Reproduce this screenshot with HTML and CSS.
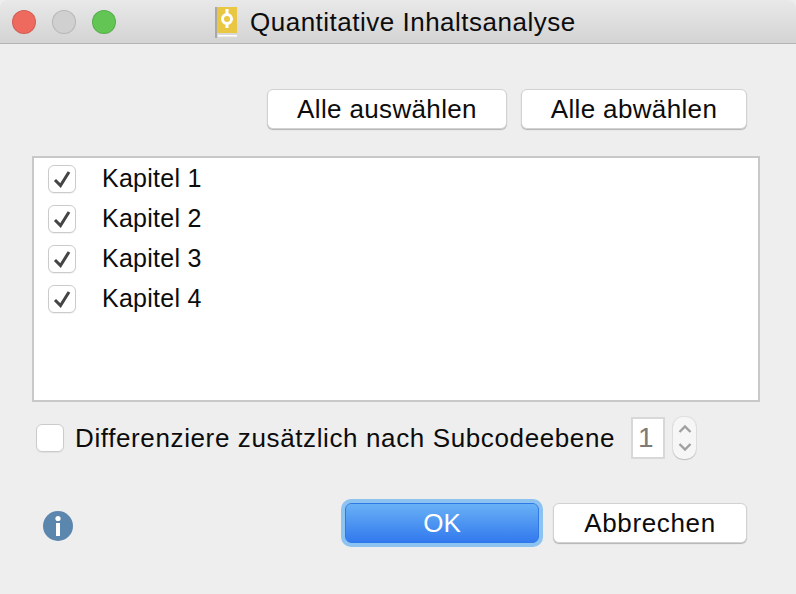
FILE: index.html
```html
<!DOCTYPE html>
<html lang="de">
<head>
    <meta charset="UTF-8">
    <title>Quantitative Inhaltsanalyse</title>
    <link rel="stylesheet" href="styles.css">
</head>
<body>
    <div class="titlebar">
        <div class="lights">
            <span class="light red"></span>
            <span class="light grey"></span>
            <span class="light green"></span>
        </div>
        <svg class="doc-icon" width="22" height="31" viewBox="0 0 22 31">
            <rect x="0" y="0" width="2" height="31" fill="#a8a8a8"/>
            <rect x="2" y="0" width="20" height="26" fill="#e9c742"/>
            <rect x="2" y="26" width="20" height="5" fill="#d8d8d8"/>
            <rect x="3" y="28" width="19" height="1.5" fill="#fff"/>
            <rect x="10.5" y="2" width="3" height="19" fill="#fff"/>
            <circle cx="12" cy="12" r="4.5" fill="#e9c742" stroke="#fff" stroke-width="3"/>
        </svg>
        <div class="title">Quantitative Inhaltsanalyse</div>
    </div>

    <div class="dialog">
        <div class="top-actions">
            <button class="btn select-all">Alle auswählen</button>
            <button class="btn deselect-all">Alle abwählen</button>
        </div>

        <div class="chapter-list">
            <div class="chapter"><span class="check"><svg width="18" height="18" viewBox="0 0 18 18"><path d="M2 10 L7.5 15.5 L16 2" class="tick"/></svg></span><span class="chapter-name">Kapitel 1</span></div>
            <div class="chapter"><span class="check"><svg width="18" height="18" viewBox="0 0 18 18"><path d="M2 10 L7.5 15.5 L16 2" class="tick"/></svg></span><span class="chapter-name">Kapitel 2</span></div>
            <div class="chapter"><span class="check"><svg width="18" height="18" viewBox="0 0 18 18"><path d="M2 10 L7.5 15.5 L16 2" class="tick"/></svg></span><span class="chapter-name">Kapitel 3</span></div>
            <div class="chapter"><span class="check"><svg width="18" height="18" viewBox="0 0 18 18"><path d="M2 10 L7.5 15.5 L16 2" class="tick"/></svg></span><span class="chapter-name">Kapitel 4</span></div>
        </div>

        <div class="subcode-row">
            <span class="check empty"></span>
            <span class="subcode-label">Differenziere zusätzlich nach Subcodeebene</span>
            <span class="level-input">1</span>
            <span class="stepper">
                <svg width="14" height="36" viewBox="0 0 14 36">
                    <path d="M1.5 12 L7 6.5 L12.5 12" class="chevron"/>
                    <path d="M1.5 24 L7 29.5 L12.5 24" class="chevron"/>
                </svg>
            </span>
        </div>

        <div class="bottom-actions">
            <svg class="info-icon" width="30" height="30" viewBox="0 0 30 30">
                <circle cx="15" cy="15" r="15" fill="#5b86ad"/>
                <circle cx="15" cy="7.5" r="2.6" fill="#fff"/>
                <rect x="13" y="12" width="4" height="13" fill="#fff"/>
            </svg>
            <button class="btn ok">OK</button>
            <button class="btn cancel">Abbrechen</button>
        </div>
    </div>
</body>
</html>
```

FILE: styles.css
```css
* {
    box-sizing: border-box;
}

html, body {
    height: 100%;
}

body {
    margin: 0;
    background-color: #eeeeee;
    font-family: "Liberation Sans", Arial, sans-serif;
    font-size: 26px;
    letter-spacing: 0.5px;
    color: #0c0c0c;
    overflow: hidden;
}

.titlebar {
    height: 44px;
    display: flex;
    align-items: center;
    padding-left: 12px;
    background: linear-gradient(#e9e9e9, #d3d3d3);
    border-bottom: 1px solid #b4b4b4;
    border-radius: 8px 8px 0 0;
}

.lights {
    display: flex;
    gap: 16px;
}

.light {
    width: 24px;
    height: 24px;
    border-radius: 50%;
    border: 1px solid rgba(0,0,0,0.12);
}

.light.red {
    background-color: #ee6a5f;
}

.light.grey {
    background-color: #d0d0d0;
}

.light.green {
    background-color: #62c554;
}

.doc-icon {
    margin-left: 99px;
    margin-top: 2px;
}

.title {
    margin-left: 13px;
    line-height: 44px;
}

.dialog {
    padding: 45px 36px 0 32px;
}

.top-actions {
    display: flex;
    justify-content: flex-end;
    gap: 14px;
    padding-right: 13px;
}

.btn {
    height: 40px;
    padding: 0;
    border: 1px solid #d2d2d2;
    border-radius: 6px;
    background-color: #fff;
    box-shadow: 0 1px 1px rgba(0,0,0,0.25);
    font-family: inherit;
    font-size: 26px;
    letter-spacing: 0.35px;
    color: #0c0c0c;
}

.select-all {
    width: 240px;
}

.deselect-all {
    width: 226px;
}

.chapter-list {
    width: 728px;
    height: 246px;
    margin-top: 27px;
    padding-top: 1px;
    background-color: #fff;
    border: 2px solid #c8c8c8;
}

.chapter {
    height: 40px;
    display: flex;
    align-items: center;
    padding-left: 14px;
    font-size: 25px;
    letter-spacing: 0.25px;
}

.chapter-name {
    margin-bottom: 2px;
}

.check {
    width: 28px;
    height: 28px;
    display: flex;
    align-items: center;
    justify-content: center;
    background-color: #fff;
    border: 1px solid #cbcbcb;
    border-radius: 6px;
    box-shadow: 0 1px 1px rgba(0,0,0,0.06);
}

.chapter .check {
    margin-right: 26px;
}

.tick {
    fill: none;
    stroke: #444;
    stroke-width: 3;
}

.subcode-row {
    display: flex;
    align-items: center;
    height: 44px;
    margin-top: 14px;
    padding-left: 4px;
}

.subcode-label {
    margin-left: 11px;
    width: 556px;
    white-space: nowrap;
    letter-spacing: 0.62px;
}

.level-input {
    width: 34px;
    height: 42px;
    display: flex;
    align-items: center;
    padding-left: 5px;
    background-color: #fff;
    border: 2px solid #d8d8d8;
    font-size: 28px;
    color: #807a75;
}

.stepper {
    width: 23px;
    height: 42px;
    margin-left: 8px;
    display: flex;
    align-items: center;
    justify-content: center;
    background-color: #f6f6f6;
    border-radius: 10px;
    box-shadow: 0 0 0 1px rgba(0,0,0,0.06), 0 1px 1px rgba(0,0,0,0.15);
}

.chevron {
    fill: none;
    stroke: #a0a0a0;
    stroke-width: 2.4;
}

.bottom-actions {
    display: flex;
    align-items: center;
    height: 48px;
    margin-top: 39px;
    padding-left: 11px;
}

.info-icon {
    margin-top: 6px;
}

.ok {
    width: 194px;
    margin-left: 272px;
    border: 1px solid #2f78e8;
    background: linear-gradient(#69b1f5, #3279ee);
    box-shadow: 0 0 0 4px #8cc3f0;
    letter-spacing: 0;
    color: #fff;
}

.cancel {
    width: 194px;
    margin-left: 14px;
    letter-spacing: 0.65px;
}
```
